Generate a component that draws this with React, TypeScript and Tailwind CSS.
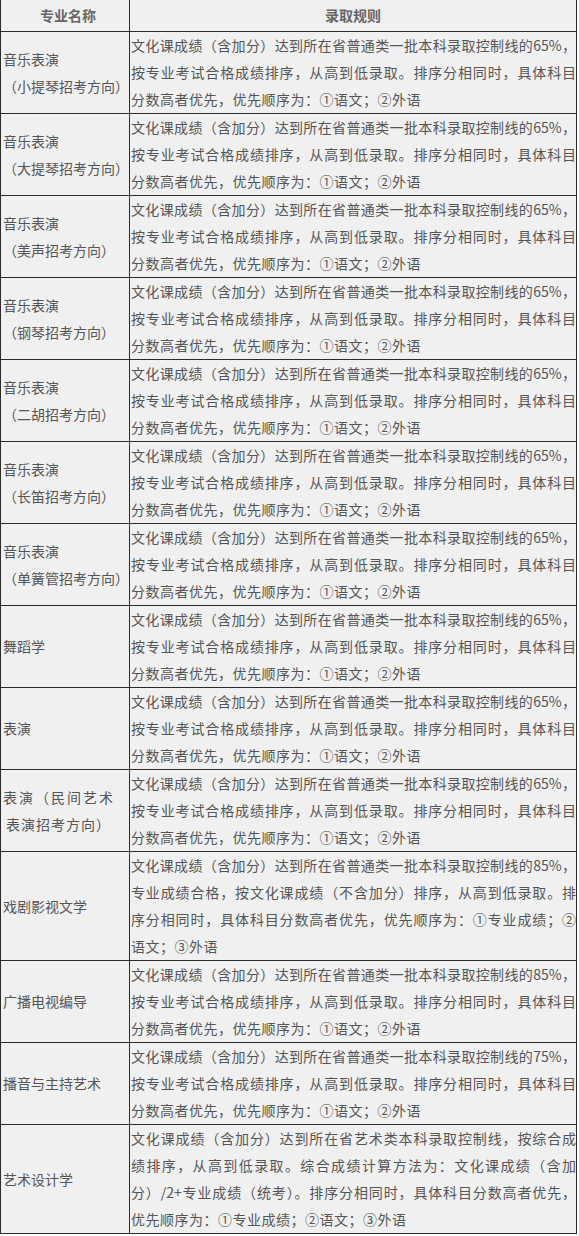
import React from 'react'

type Row = {
  name: string[]
  rule: string[]
}

const std = (pct: string): string[] => [
  `文化课成绩（含加分）达到所在省普通类一批本科录取控制线的${pct}，`,
  '按专业考试合格成绩排序，从高到低录取。排序分相同时，具体科目',
  '分数高者优先，优先顺序为：①语文；②外语',
]

const rows: Row[] = [
  { name: ['音乐表演', '（小提琴招考方向）'], rule: std('65%') },
  { name: ['音乐表演', '（大提琴招考方向）'], rule: std('65%') },
  { name: ['音乐表演', '（美声招考方向）'], rule: std('65%') },
  { name: ['音乐表演', '（钢琴招考方向）'], rule: std('65%') },
  { name: ['音乐表演', '（二胡招考方向）'], rule: std('65%') },
  { name: ['音乐表演', '（长笛招考方向）'], rule: std('65%') },
  { name: ['音乐表演', '（单簧管招考方向）'], rule: std('65%') },
  { name: ['舞蹈学'], rule: std('65%') },
  { name: ['表演'], rule: std('65%') },
  { name: ['表演（民间艺术', '表演招考方向）'], rule: std('65%') },
  {
    name: ['戏剧影视文学'],
    rule: [
      '文化课成绩（含加分）达到所在省普通类一批本科录取控制线的85%，',
      '专业成绩合格，按文化课成绩（不含加分）排序，从高到低录取。排',
      '序分相同时，具体科目分数高者优先，优先顺序为：①专业成绩；②',
      '语文；③外语',
    ],
  },
  { name: ['广播电视编导'], rule: std('85%') },
  { name: ['播音与主持艺术'], rule: std('75%') },
  {
    name: ['艺术设计学'],
    rule: [
      '文化课成绩（含加分）达到所在省艺术类本科录取控制线，按综合成',
      '绩排序，从高到低录取。综合成绩计算方法为：文化课成绩（含加',
      '分）/2+专业成绩（统考）。排序分相同时，具体科目分数高者优先，',
      '优先顺序为：①专业成绩；②语文；③外语',
    ],
  },
]

// 民间艺术那一格是两端撑开的，单独处理
function NameCell({ name, idx }: { name: string[]; idx: number }) {
  if (idx === 9) {
    return (
      <div className="w-[128px] shrink-0 flex flex-col justify-center pl-[2px]">
        <div className="whitespace-nowrap tracking-[2px]">{name[0]}</div>
        <div className="whitespace-nowrap pl-[3px] tracking-[1px]">{name[1]}</div>
      </div>
    )
  }
  return (
    <div className="w-[128px] shrink-0 flex flex-col justify-center pl-[2px]">
      {name.map((n, i) => (
        <div key={i} className="whitespace-nowrap">{n}</div>
      ))}
    </div>
  )
}

function App() {
  return (
    <div className="w-[579px] min-h-[1236px] bg-white font-['Noto_Sans_CJK_SC',sans-serif] text-[14px] leading-[27px] text-[#555]">
      <div className="w-[577px] border-x border-[#2b2b2b] bg-[#f0f0f0]">
        {/* header */}
        <div className="flex h-[32px] border-b border-[#2b2b2b] font-bold text-[#666]">
          <div className="w-[128px] shrink-0 flex items-center justify-center pl-[6px]">专业名称</div>
          <div className="w-[447px] border-l border-[#2b2b2b] flex items-center justify-center">录取规则</div>
        </div>
        {rows.map((r, idx) => (
          <div key={idx} className="flex border-b border-[#2b2b2b]">
            <NameCell name={r.name} idx={idx} />
            <div className="w-[447px] border-l border-[#2b2b2b] pl-[1px]">
              {r.rule.map((line, i) =>
                i < r.rule.length - 1 ? (
                  <div key={i} className="text-justify [text-align-last:justify]">{line}</div>
                ) : (
                  <div key={i} className="tracking-[0.5px]">{line}</div>
                )
              )}
            </div>
          </div>
        ))}
      </div>
    </div>
  )
}

export default App
